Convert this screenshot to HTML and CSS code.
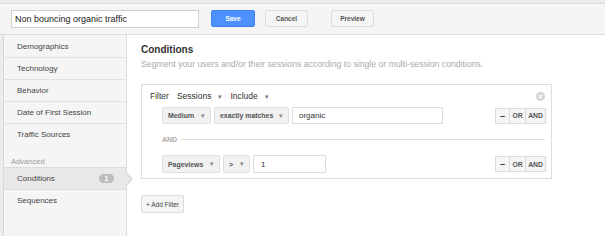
FILE: index.html
```html
<!DOCTYPE html>
<html>
<head>
<meta charset="utf-8">
<link rel="stylesheet" href="styles.css">
</head>
<body>
<div class="topstrip"></div>
<header class="header">
  <div class="name-input">Non bouncing organic traffic</div>
  <button class="btn btn-save">Save</button>
  <button class="btn btn-cancel">Cancel</button>
  <button class="btn btn-preview">Preview</button>
</header>
<div class="body">
  <div class="gutter"></div>
  <nav class="sidebar">
    <div class="nav-item">Demographics</div>
    <div class="nav-item">Technology</div>
    <div class="nav-item">Behavior</div>
    <div class="nav-item">Date of First Session</div>
    <div class="nav-item last">Traffic Sources</div>
    <div class="nav-label">Advanced</div>
    <div class="nav-item active">Conditions <span class="badge">1</span><span class="notch"></span></div>
    <div class="nav-item plain">Sequences</div>
  </nav>
  <main class="main">
    <h1 class="title">Conditions</h1>
    <p class="subtitle">Segment your users and/or their sessions according to single or multi-session conditions.</p>
    <div class="filter-box">
      <div class="filter-head">
        <span class="fh-label">Filter</span>
        <span class="fh-drop">Sessions<span class="caret">&#9662;</span></span>
        <span class="fh-drop">Include<span class="caret">&#9662;</span></span>
        <span class="close"><svg width="9" height="9" viewBox="0 0 9 9"><circle cx="4.5" cy="4.5" r="4.5" fill="#d4d4d4"/><path d="M2.8 2.8 L6.2 6.2 M6.2 2.8 L2.8 6.2" stroke="#fff" stroke-width="1.2"/></svg></span>
      </div>
      <div class="cond-row">
        <span class="dd dd-medium">Medium <span class="caret">&#9662;</span></span>
        <span class="dd dd-match">exactly matches <span class="caret">&#9662;</span></span>
        <span class="val val-wide">organic</span>
        <span class="ops"><span class="op op-minus">&#8211;</span><span class="op op-or">OR</span><span class="op op-and">AND</span></span>
      </div>
      <div class="and-sep"><span>AND</span><i></i></div>
      <div class="cond-row row2">
        <span class="dd dd-pv">Pageviews <span class="caret">&#9662;</span></span>
        <span class="dd dd-gt">&gt; <span class="caret">&#9662;</span></span>
        <span class="val val-short">1</span>
        <span class="ops"><span class="op op-minus">&#8211;</span><span class="op op-or">OR</span><span class="op op-and">AND</span></span>
      </div>
    </div>
    <button class="btn btn-add">+ Add Filter</button>
  </main>
</div>
</body>
</html>
```
FILE: styles.css
```css
* { box-sizing: border-box; }
html, body { margin: 0; padding: 0; }
body {
  width: 605px;
  height: 236px;
  overflow: hidden;
  background: #ececec;
  font-family: "Liberation Sans", Arial, sans-serif;
  color: #333;
}
.topstrip { height: 3px; background: #ececec; }
.header {
  height: 32px;
  background: #f5f5f5;
  border-top: 1px solid #dcdcdc;
  border-bottom: 1px solid #dcdcdc;
  display: flex;
  align-items: flex-start;
  padding: 6px 0 0 11px;
}
.name-input {
  width: 188px;
  height: 18px;
  background: #fff;
  border: 1px solid #cfcfcf;
  font-size: 9px;
  line-height: 16px;
  padding-left: 3px;
  color: #222;
}
.btn {
  font-family: "Liberation Sans", Arial, sans-serif;
  height: 17px;
  padding: 0;
  font-size: 6.5px;
  font-weight: bold;
  border-radius: 2px;
  border: 1px solid #dcdcdc;
  background: #f5f5f5;
  color: #555;
  line-height: 15px;
  white-space: nowrap;
}
.btn-save {
  margin-left: 12px;
  width: 44px;
  background: #4d90fe;
  border-color: #3d82f4;
  color: #fff;
}
.btn-cancel { margin-left: 10px; width: 43px; }
.btn-preview { margin-left: 23px; width: 43px; }

.body { display: flex; height: 201px; }
.gutter { width: 4px; background: #ececec; border-right: 1px solid #d6d6d6; }
.sidebar {
  width: 123px;
  background: #f5f5f5;
  border-right: 1px solid #dcdcdc;
  padding-top: 1px;
}
.nav-item {
  height: 22px;
  border-bottom: 1px solid #e2e2e2;
  font-size: 8px;
  line-height: 21px;
  padding-left: 13px;
  color: #444;
  position: relative;
  white-space: nowrap;
}
.nav-item.last { border-bottom: none; }
.nav-item.plain { border-bottom: none; }
.nav-label {
  font-size: 7.6px;
  color: #999;
  padding: 11px 0 0 7px;
  height: 21px;
  line-height: 9px;
}
.nav-item.active {
  background: #e8e8e8;
  border-top: 1px solid #dcdcdc;
  border-bottom: 1px solid #dcdcdc;
  height: 23px;
  line-height: 21px;
}
.badge {
  position: absolute;
  left: 95px;
  top: 6px;
  width: 15px;
  height: 9px;
  border-radius: 5px;
  background: #bdbdbd;
  color: #fff;
  font-size: 7px;
  font-weight: bold;
  line-height: 9px;
  text-align: center;
}
.notch {
  position: absolute;
  right: -7px;
  top: 4px;
  width: 0; height: 0;
  border-top: 7px solid transparent;
  border-bottom: 7px solid transparent;
  border-left: 6px solid #dcdcdc;
}
.notch::after {
  content: "";
  position: absolute;
  left: -7px;
  top: -6px;
  border-top: 6px solid transparent;
  border-bottom: 6px solid transparent;
  border-left: 5px solid #e8e8e8;
}

.main {
  flex: 1;
  background: #fff;
  padding: 9px 0 0 14px;
}
.title {
  margin: 0;
  font-size: 10px;
  font-weight: bold;
  color: #333;
  line-height: 12px;
}
.subtitle {
  margin: 3px 0 0;
  font-size: 8.7px;
  color: #aaa;
  line-height: 11px;
  white-space: nowrap;
}
.filter-box {
  margin-top: 14px;
  width: 411px;
  height: 95px;
  border: 1px solid #dedede;
  padding: 0 5px 0 20px;
}
.filter-head {
  height: 21px;
  display: flex;
  align-items: center;
  margin-left: -12px;
  font-size: 8.5px;
  color: #333;
  padding-top: 1px;
}
.fh-label { margin-right: 8px; }
.fh-drop { margin-right: 8px; }
.fh-drop .caret { margin-left: 7px; }
.caret { font-size: 7px; color: #777; margin-left: 3px; }
.close { margin-left: auto; margin-right: 1px; display: flex; }

.cond-row {
  margin-top: 1px;
  height: 17px;
  display: flex;
  align-items: stretch;
}
.row2 { height: 18px; }
.dd {
  background: #f1f1f1;
  border: 1px solid #e0e0e0;
  border-radius: 2px;
  font-size: 6.9px;
  font-weight: bold;
  color: #555;
  display: flex;
  align-items: center;
  justify-content: space-between;
  padding: 0 5px 0 5px;
  margin-right: 3px;
  white-space: nowrap;
}
.dd .caret { font-size: 7px; color: #888; font-weight: normal; }
.dd-medium { width: 49px; }
.dd-match { width: 75px; }
.dd-pv { width: 58px; }
.dd-gt { width: 27px; }
.val {
  border: 1px solid #dcdcdc;
  font-size: 8px;
  color: #333;
  display: flex;
  align-items: center;
  padding-left: 6px;
}
.val-wide { width: 151px; }
.val-short { width: 73px; padding-left: 7px; }
.ops {
  margin-left: auto;
  display: flex;
  height: 16px;
  align-self: center;
}
.op {
  border: 1px solid #dcdcdc;
  background: #f5f5f5;
  font-size: 6.8px;
  font-weight: bold;
  color: #555;
  display: flex;
  align-items: center;
  justify-content: center;
}
.op + .op { border-left: none; }
.op-minus { width: 15px; font-size: 9px; color: #333; }
.op-or { width: 16px; }
.op-and { width: 20px; }
.and-sep {
  height: 30px;
  display: flex;
  align-items: center;
  padding-right: 1px;
}
.and-sep span {
  font-size: 7px;
  font-weight: bold;
  color: #aaa;
  margin-right: 4px;
}
.and-sep i { flex: 1; height: 1px; background: #dcdcdc; }
.btn-add {
  margin-top: 16px;
  width: 43px;
  height: 18px;
  font-weight: normal;
  font-size: 6.5px;
  color: #444;
  display: block;
}
```
